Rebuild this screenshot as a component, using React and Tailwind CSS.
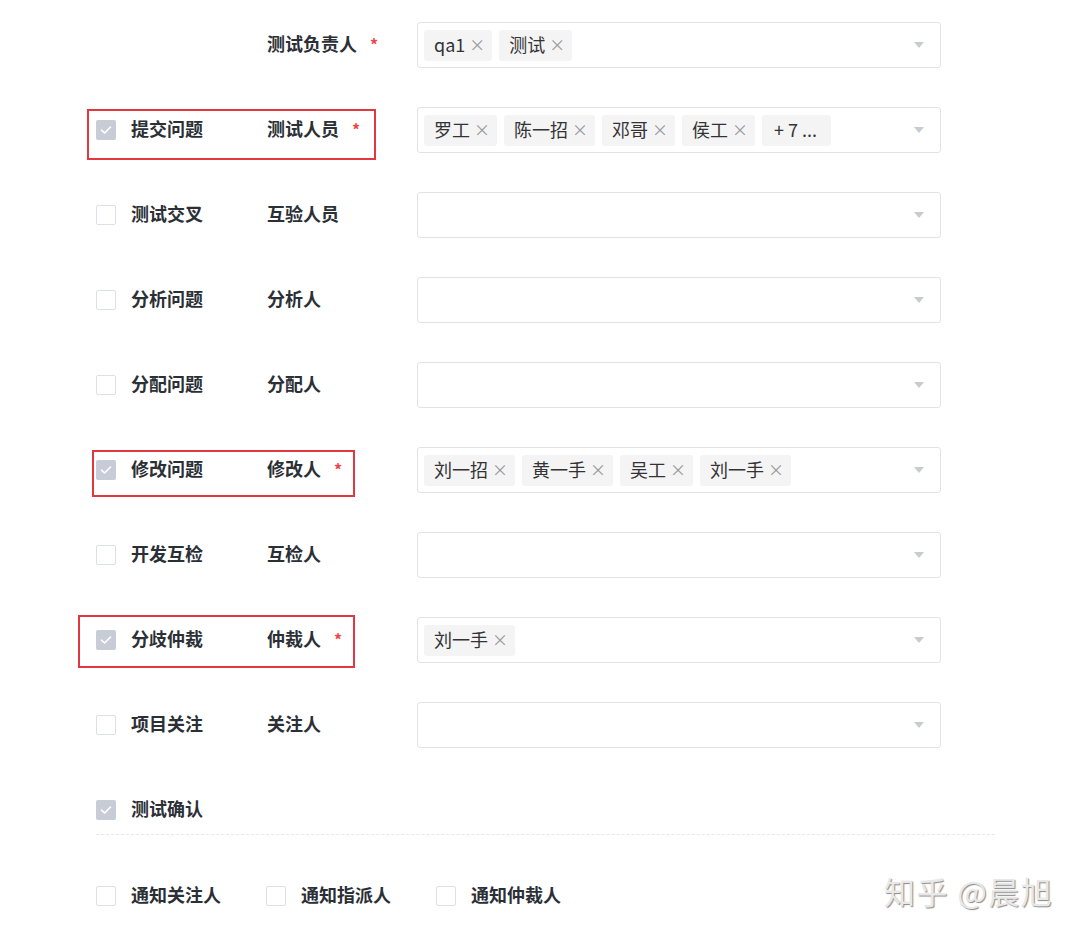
import React from 'react'

const rows = [
  { check: null, label: '测试负责人', required: true, tags: ['qa1', '测试'] },
  { check: true, name: '提交问题', label: '测试人员', required: true, tags: ['罗工', '陈一招', '邓哥', '侯工'], more: '+ 7 ...' },
  { check: false, name: '测试交叉', label: '互验人员', tags: [] },
  { check: false, name: '分析问题', label: '分析人', tags: [] },
  { check: false, name: '分配问题', label: '分配人', tags: [] },
  { check: true, name: '修改问题', label: '修改人', required: true, tags: ['刘一招', '黄一手', '吴工', '刘一手'] },
  { check: false, name: '开发互检', label: '互检人', tags: [] },
  { check: true, name: '分歧仲裁', label: '仲裁人', required: true, tags: ['刘一手'] },
  { check: false, name: '项目关注', label: '关注人', tags: [] },
]

// red annotation frames, offsets relative to the row (row starts at x=96)
const marks = {
  1: 'left-[-9px] w-[289px] top-[2px] h-[51px]',
  5: 'left-[-4px] w-[263px] top-[3px] h-[47px]',
  7: 'left-[-18px] w-[277px] top-[-2px] h-[53px]',
}

function Checkbox({ checked }) {
  if (checked) {
    return (
      <span className="w-[20px] h-[20px] rounded-[2px] bg-[#c7ccd6] flex items-center justify-center shrink-0">
        <svg width="12" height="10" viewBox="0 0 12 10" fill="none">
          <path d="M1.5 5.2 L4.6 8 L10.5 2" stroke="#ffffff" strokeWidth="1.6" strokeLinecap="round" strokeLinejoin="round" />
        </svg>
      </span>
    )
  }
  return <span className="w-[20px] h-[20px] rounded-[2px] border border-[#dcdfe6] bg-white shrink-0" />
}

function Tag({ text }) {
  return (
    <span className="h-[31px] flex items-center bg-[#f4f4f5] rounded-[3px] pl-[10px] pr-[7px] pb-[2px] text-[18px] text-[#333] leading-none">
      <span>{text}</span>
      <span className="ml-[4px] text-[#999] text-[16px]">×</span>
    </span>
  )
}

function More({ text }) {
  return (
    <span className="h-[31px] flex items-center bg-[#f4f4f5] rounded-[3px] pl-[12px] pr-[14px] pb-[2px] text-[18px] text-[#333] leading-none whitespace-pre">
      {text}
    </span>
  )
}

function Select({ tags, more }) {
  return (
    <div className="w-[524px] h-[46px] border border-[#e1e3e8] rounded-[3px] flex items-center pl-[6px] pr-[16px] bg-white">
      <div className="flex-1 flex items-center gap-[7px]">
        {tags.map(t => <Tag key={t} text={t} />)}
        {more && <More text={more} />}
      </div>
      <svg width="10" height="6" viewBox="0 0 10 6">
        <path d="M0 0 L10 0 L5 6 Z" fill="#c8cbd1" />
      </svg>
    </div>
  )
}

export default function App() {
  return (
    <div
      className="relative w-[1080px] h-[938px] bg-white overflow-hidden text-[#2b2f36]"
      style={{ fontFamily: '"Noto Sans CJK SC", "Noto Sans", sans-serif' }}
    >
      <div className="flex flex-col gap-[39px] pt-[22px] pl-[96px]">
        {rows.map((r, i) => (
          <div key={i} className="relative flex items-center h-[46px]">
            {marks[i] && <div className={`absolute border-2 border-[#e0383e] ${marks[i]}`} />}
            <div className="w-[171px] flex items-center gap-[15px]">
              {r.check !== null && <Checkbox checked={r.check} />}
              {r.name && <span className="text-[18px] font-bold pb-[3px]">{r.name}</span>}
            </div>
            <div className="w-[150px] flex items-center pb-[3px]">
              <span className="text-[18px] font-bold">{r.label}</span>
              {r.required && <span className="ml-[13px] text-[#f0444a] text-[16px] font-bold">*</span>}
            </div>
            <Select tags={r.tags} more={r.more} />
          </div>
        ))}
        <div className="flex items-center h-[46px] gap-[15px]">
          <Checkbox checked />
          <span className="text-[18px] font-bold pb-[3px]">测试确认</span>
        </div>
      </div>

      <div className="ml-[96px] mr-[85px] mt-[1px] border-t border-dashed border-[#e6e8eb]" />

      <div className="flex items-center pl-[96px] mt-[49px] h-[24px]">
        {['通知关注人', '通知指派人', '通知仲裁人'].map(t => (
          <div key={t} className="w-[170px] flex items-center gap-[15px]">
            <Checkbox checked={false} />
            <span className="text-[18px] font-bold pb-[3px]">{t}</span>
          </div>
        ))}
      </div>

      <div
        className="absolute left-[884px] top-[868px] text-[31px] text-[#e8e8e8] tracking-[1.5px]"
        style={{ textShadow: '1px 1px 1px #8a8a8a' }}
      >
        知乎 @晨旭
      </div>
    </div>
  )
}
